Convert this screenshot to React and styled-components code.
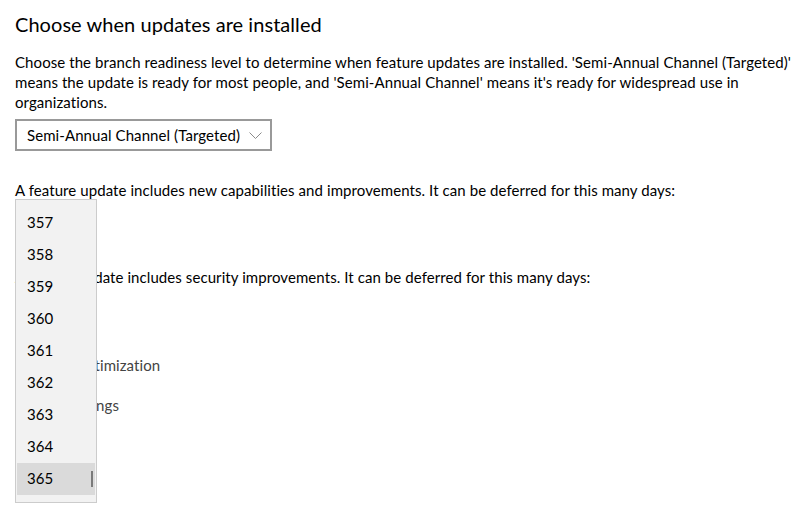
import React from "react";
import styled, { createGlobalStyle } from "styled-components";

const Global = createGlobalStyle`
  html, body { margin: 0; padding: 0; background: #ffffff; }
  body { font-family: Lato, "Liberation Sans", sans-serif; color: #000; }
`;

const Page = styled.div`
  position: relative;
  width: 802px;
  height: 507px;
  overflow: hidden;
  box-sizing: border-box;
  padding: 10px 0 0 15px;
  font-family: Lato, "Liberation Sans", sans-serif;
`;

const Title = styled.h1`
  margin: 0;
  font-size: 20px;
  line-height: 28px;
  font-weight: 400;
  letter-spacing: 0.05px;
  color: #000;
`;

const Text = styled.p`
  margin: ${(p) => p.$top || 0}px 0 0 0;
  width: 785px;
  font-size: 15px;
  line-height: 20px;
  letter-spacing: 0.08px;
  color: ${(p) => (p.$muted ? "#444" : "#000")};
`;

const Select = styled.div`
  margin-top: ${(p) => p.$top || 0}px;
  box-sizing: border-box;
  width: ${(p) => p.$width}px;
  height: 32px;
  border: 2px solid #999;
  display: flex;
  align-items: center;
  justify-content: space-between;
  padding: 0 8px 0 10px;
  font-size: 15px;
  line-height: 28px;
  letter-spacing: 0.08px;
  background: #fff;
`;

const Chevron = styled.svg`
  width: 13px;
  height: 7px;
  flex: none;
`;

const Popup = styled.div`
  position: absolute;
  left: 15px;
  top: 199px;
  box-sizing: border-box;
  width: 82px;
  height: 304px;
  padding: 7px 1px;
  border: 1px solid #cccccc;
  background: #f2f2f2;
`;

const Item = styled.div`
  box-sizing: border-box;
  height: 32px;
  padding-left: 10px;
  font-size: 15px;
  line-height: 31px;
  color: #000;
  background: ${(p) => (p.$selected ? "#dadada" : "transparent")};
`;

const Thumb = styled.div`
  position: absolute;
  right: 3px;
  top: 271px;
  width: 2px;
  height: 16px;
  background: #7a7a7a;
`;

const days = [357, 358, 359, 360, 361, 362, 363, 364, 365];

export default function App() {
  return (
    <>
      <Global />
      <Page>
        <Title>Choose when updates are installed</Title>
        <Text $top={14}>
          Choose the branch readiness level to determine when feature updates are installed. 'Semi-Annual Channel (Targeted)' means the update is ready for most people, and 'Semi-Annual Channel' means it's ready for widespread use in organizations.
        </Text>
        <Select $top={7} $width={257}>
          <span>Semi-Annual Channel (Targeted)</span>
          <Chevron viewBox="0 0 13 7">
            <polyline points="0.5,0.5 6.5,6.5 12.5,0.5" fill="none" stroke="#8a8a8a" strokeWidth="1" />
          </Chevron>
        </Select>
        <Text $top={29}>
          A feature update includes new capabilities and improvements. It can be deferred for this many days:
        </Text>
        <Select $top={7} $width={82}>
          <span>365</span>
        </Select>
        <Text $top={28}>
          A quality update includes security improvements. It can be deferred for this many days:
        </Text>
        <Select $top={6} $width={82}>
          <span>0</span>
        </Select>
        <Text $top={30} $muted>Delivery Optimization</Text>
        <Text $top={20} $muted>Privacy settings</Text>
        <Popup>
          {days.map((d) => (
            <Item key={d} $selected={d === 365}>{d}</Item>
          ))}
          <Thumb />
        </Popup>
      </Page>
    </>
  );
}
